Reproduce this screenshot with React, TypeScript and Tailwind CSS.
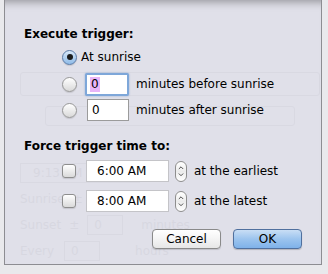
import { ChevronDown, ChevronUp } from "lucide-react";

const font = "font-['DejaVu_Sans',sans-serif]";

function Radio({ on }: { on?: boolean }) {
  return (
    <span
      className={`flex h-[15px] w-[15px] shrink-0 items-center justify-center rounded-full border shadow-[0_1px_1px_rgba(0,0,0,0.12)] ${
        on
          ? "border-[#5a7aa6] bg-gradient-to-b from-[#d8e8f8] to-[#8fbbe8]"
          : "border-[#979797] bg-gradient-to-b from-[#ffffff] to-[#d9d9d9]"
      }`}
    >
      {on && <span className="h-[6px] w-[6px] rounded-full bg-[#1c1c1c]" />}
    </span>
  );
}

function Checkbox() {
  return (
    <span className="h-[14px] w-[14px] shrink-0 rounded-[3px] border border-[#8e8e8e] bg-gradient-to-b from-[#ffffff] to-[#dadada] shadow-[0_1px_1px_rgba(0,0,0,0.12)]" />
  );
}

function Stepper() {
  return (
    <span className="flex h-[21px] w-[12px] flex-col items-center justify-between rounded-[6px] border border-[#8e8e8e] bg-gradient-to-b from-[#ffffff] via-[#ececec] to-[#ffffff] py-[2px] text-[#444]">
      <ChevronUp size={8} strokeWidth={3} />
      <ChevronDown size={8} strokeWidth={3} />
    </span>
  );
}

export default function App() {
  return (
    <div className={`relative h-[274px] w-[328px] overflow-hidden bg-[#e9e9ec] ${font} text-[12px] text-black`}>
      {/* window behind the sheet */}
      <div className="flex flex-col pl-[20px] pt-[72px] text-[12px] text-[#222]">
        <div className="h-[24px] w-[300px] rounded-[3px] border border-[#555]" />
        <div className="mt-[10px] ml-[25px] h-[20px] w-[250px] rounded-[3px] border border-[#555]" />
        <div className="mt-[36px] flex h-[22px] items-center">
          <span className="h-[20px] w-[120px] border border-[#555] pl-[12px] leading-[18px]">9:13 AM</span>
        </div>
        <div className="mt-[4px] flex h-[22px] items-center gap-[8px]">
          <span>Sunrise</span>
          <span>±</span>
        </div>
        <div className="mt-[4px] flex h-[22px] items-center gap-[8px]">
          <span>Sunset</span>
          <span>±</span>
          <span className="h-[20px] w-[36px] border border-[#555] pl-[6px] leading-[18px]">0</span>
          <span className="ml-[10px]">minutes</span>
        </div>
        <div className="mt-[4px] flex h-[22px] items-center gap-[10px]">
          <span>Every</span>
          <span className="h-[20px] w-[36px] border border-[#555] pl-[6px] leading-[18px]">0</span>
          <span className="ml-[25px]">hours</span>
        </div>
      </div>

      {/* sheet */}
      <div className="absolute left-[4px] top-0 flex h-[265px] w-[318px] flex-col border-x border-b border-[#8d8d92] bg-[#dfdfe8]/[0.96] pl-[19px] pr-[19px] pt-[26px] shadow-[inset_0_10px_8px_-8px_rgba(0,0,0,0.35)]">
        <div className="h-[16px] font-bold leading-[16px]">Execute trigger:</div>

        <div className="mt-[5px] flex h-[20px] items-center pl-[38px]">
          <Radio on />
          <span className="ml-[4px]">At sunrise</span>
        </div>

        <div className="mt-[4px] flex h-[26px] items-center pl-[38px]">
          <Radio />
          <span className="ml-[8px] flex h-[23px] w-[44px] items-center rounded-[2px] border-[2px] border-[#7ea7d9] bg-white pl-[3px] shadow-[0_0_2px_rgba(80,130,200,0.6)]">
            <span className="bg-[#e8b4f8] px-[1px] leading-[15px]">0</span>
          </span>
          <span className="ml-[7px]">minutes before sunrise</span>
        </div>

        <div className="flex h-[26px] items-center pl-[38px]">
          <Radio />
          <span className="ml-[10px] flex h-[22px] w-[42px] items-center border border-[#9b9b9b] bg-white pl-[4px]">0</span>
          <span className="ml-[7px]">minutes after sunrise</span>
        </div>

        <div className="mt-[15px] h-[16px] font-bold leading-[16px]">Force trigger time to:</div>

        <div className="mt-[6px] flex h-[22px] items-center pl-[38px]">
          <Checkbox />
          <span className="ml-[10px] flex h-[22px] w-[83px] items-center border border-[#c4c4c8] bg-white pl-[10px]">6:00 AM</span>
          <span className="ml-[6px]"><Stepper /></span>
          <span className="ml-[7px]">at the earliest</span>
        </div>

        <div className="mt-[8px] flex h-[22px] items-center pl-[38px]">
          <Checkbox />
          <span className="ml-[10px] flex h-[22px] w-[83px] items-center border border-[#c4c4c8] bg-white pl-[10px]">8:00 AM</span>
          <span className="ml-[6px]"><Stepper /></span>
          <span className="ml-[7px]">at the latest</span>
        </div>

        <div className="mt-[17px] flex justify-end gap-[12px]">
          <button className="h-[20px] w-[69px] rounded-[4px] border border-[#8a8a8a] bg-gradient-to-b from-[#ffffff] via-[#f4f4f4] to-[#e6e6e6] text-[12px] leading-[18px] shadow-[0_1px_1px_rgba(0,0,0,0.15)]">
            Cancel
          </button>
          <button className="h-[20px] w-[69px] rounded-[4px] border border-[#50709e] bg-gradient-to-b from-[#c9def5] via-[#9cc4ee] to-[#7fb2ea] text-[12px] leading-[18px] shadow-[0_1px_1px_rgba(0,0,0,0.2)]">
            OK
          </button>
        </div>
      </div>
    </div>
  );
}
